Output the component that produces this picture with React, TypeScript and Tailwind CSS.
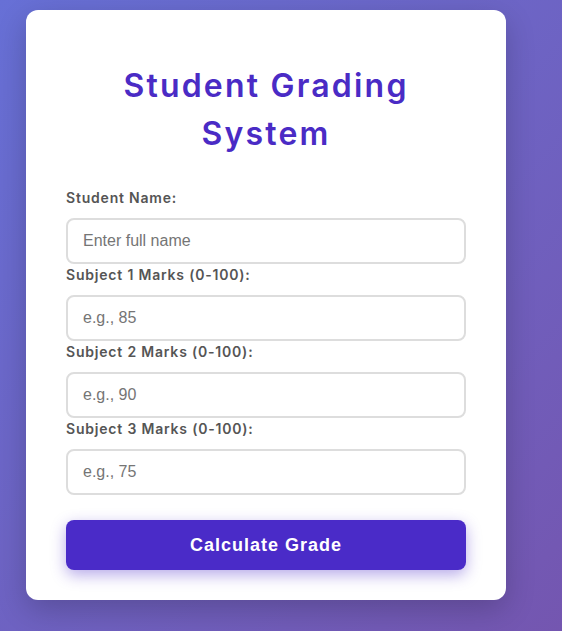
import React from "react";

const fields = [
  { label: "Student Name:", placeholder: "Enter full name", type: "text" },
  { label: "Subject 1 Marks (0-100):", placeholder: "e.g., 85", type: "number" },
  { label: "Subject 2 Marks (0-100):", placeholder: "e.g., 90", type: "number" },
  { label: "Subject 3 Marks (0-100):", placeholder: "e.g., 75", type: "number" },
];

export default function App() {
  return (
    <div className="min-h-[631px] w-[562px] bg-[linear-gradient(135deg,#6770d6_0%,#7456b0_100%)] pt-[10px] pl-[26px]">
      <div className="w-[480px] rounded-[12px] bg-white px-[40px] pt-[52px] pb-[30px] shadow-[0_10px_30px_rgba(0,0,0,0.2)]">
        <h1 className="mx-auto w-[340px] text-center font-['Inter',sans-serif] text-[32px] font-semibold leading-[48px] tracking-[2.2px] text-[#4a2bc5]">
          Student Grading System
        </h1>
        <div className="mt-[29px] flex flex-col">
          {fields.map((f) => (
            <div key={f.label} className="flex flex-col">
              <label className="mb-[10px] font-['Inter',sans-serif] text-[14px] font-semibold leading-[21px] tracking-[0.8px] text-[#555]">
                {f.label}
              </label>
              <input
                type="text"
                placeholder={f.placeholder}
                className="h-[46px] w-[400px] rounded-[8px] border-2 border-[#ddd] px-[15px] font-['Liberation_Sans',Arial,sans-serif] text-[16px] text-[#333] outline-none placeholder:text-[#757575]"
              />
            </div>
          ))}
        </div>
        <button className="mt-[25px] h-[50px] w-[400px] rounded-[8px] bg-[#4a2bc8] font-['Liberation_Sans',Arial,sans-serif] text-[18px] font-bold tracking-[1px] text-white shadow-[0_5px_15px_rgba(74,43,200,0.4)]">
          Calculate Grade
        </button>
      </div>
    </div>
  );
}
